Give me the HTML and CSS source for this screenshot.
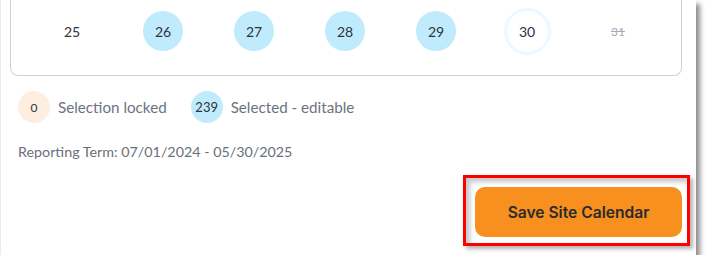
FILE: index.html
```html
<!DOCTYPE html>
<html>
<head>
<meta charset="utf-8">
<link rel="stylesheet" href="styles.css">
</head>
<body>
<div class="frame">
  <div class="card">
    <div class="days">
      <div class="day"><span class="num">25</span></div>
      <div class="day"><span class="num sel">26</span></div>
      <div class="day"><span class="num sel">27</span></div>
      <div class="day"><span class="num sel">28</span></div>
      <div class="day"><span class="num sel">29</span></div>
      <div class="day"><span class="num today">30</span></div>
      <div class="day"><span class="num off">31</span></div>
    </div>
  </div>
  <div class="legend">
    <div class="legend-item"><span class="badge locked">0</span><span class="label">Selection locked</span></div>
    <div class="legend-item"><span class="badge editable">239</span><span class="label">Selected - editable</span></div>
  </div>
  <div class="term">Reporting Term: 07/01/2024 - 05/30/2025</div>
  <div class="actions">
    <div class="highlight">
      <button class="save">Save Site Calendar</button>
    </div>
  </div>
</div>
</body>
</html>
```
FILE: styles.css
```css
html, body {
  margin: 0;
  padding: 0;
  background: #ffffff;
}
body {
  font-family: Lato, "Open Sans", sans-serif;
}
.frame {
  width: 696px;
  height: 255px;
  background: #ffffff;
  border-left: 1px solid #ececec;
  box-shadow: 4px 4px 5px rgba(0, 0, 0, 0.45);
  box-sizing: border-box;
  overflow: hidden;
}
.card {
  margin-left: 9px;
  width: 672px;
  height: 76px;
  box-sizing: border-box;
  border: 1px solid #c9d2da;
  border-top: none;
  border-radius: 0 0 8px 8px;
  padding: 0 17px 0 15.5px;
}
.days {
  display: grid;
  grid-template-columns: repeat(7, 91px);
  height: 62px;
  align-items: center;
}
.day {
  display: flex;
  justify-content: center;
  align-items: center;
}
.num {
  display: flex;
  justify-content: center;
  align-items: center;
  width: 40px;
  height: 40px;
  border-radius: 50%;
  font-size: 14px;
  color: #2b3340;
}
.num.sel {
  background: #c0ebfd;
}
.num.today {
  width: 41px;
  height: 41px;
  border: 3px solid #eef8fe;
}
.num.off {
  color: #a3abb5;
  text-decoration: line-through;
  font-size: 12px;
}
.legend {
  display: flex;
  align-items: center;
  gap: 24px;
  padding: 15px 0 0 17px;
}
.legend-item {
  display: flex;
  align-items: center;
  gap: 8px;
}
.badge {
  display: flex;
  justify-content: center;
  align-items: center;
  width: 32px;
  height: 32px;
  border-radius: 50%;
  font-size: 12px;
  color: #2b3340;
}
.badge.locked {
  background: #fdeedf;
}
.badge.editable {
  background: #c0ebfd;
  font-size: 13px;
}
.label {
  font-size: 15.2px;
  color: #6c7380;
}
.term {
  padding: 20px 0 0 17px;
  font-size: 14.3px;
  color: #6a6f78;
}
.actions {
  display: flex;
  justify-content: flex-end;
  padding: 15px 6px 0 0;
}
.highlight {
  border: 3px solid #ff0000;
  padding: 9px 5px 6px 9px;
  box-shadow: 3px 3px 4px rgba(0, 0, 0, 0.3), inset 4px 4px 5px rgba(0, 0, 0, 0.22);
  background: #ffffff;
}
.save {
  display: block;
  width: 207px;
  height: 50px;
  border: none;
  border-radius: 10px;
  background: #f7901e;
  color: #2a2a2a;
  font-family: Inter, Lato, sans-serif;
  font-weight: 600;
  font-size: 15.6px;
  cursor: pointer;
}
```
